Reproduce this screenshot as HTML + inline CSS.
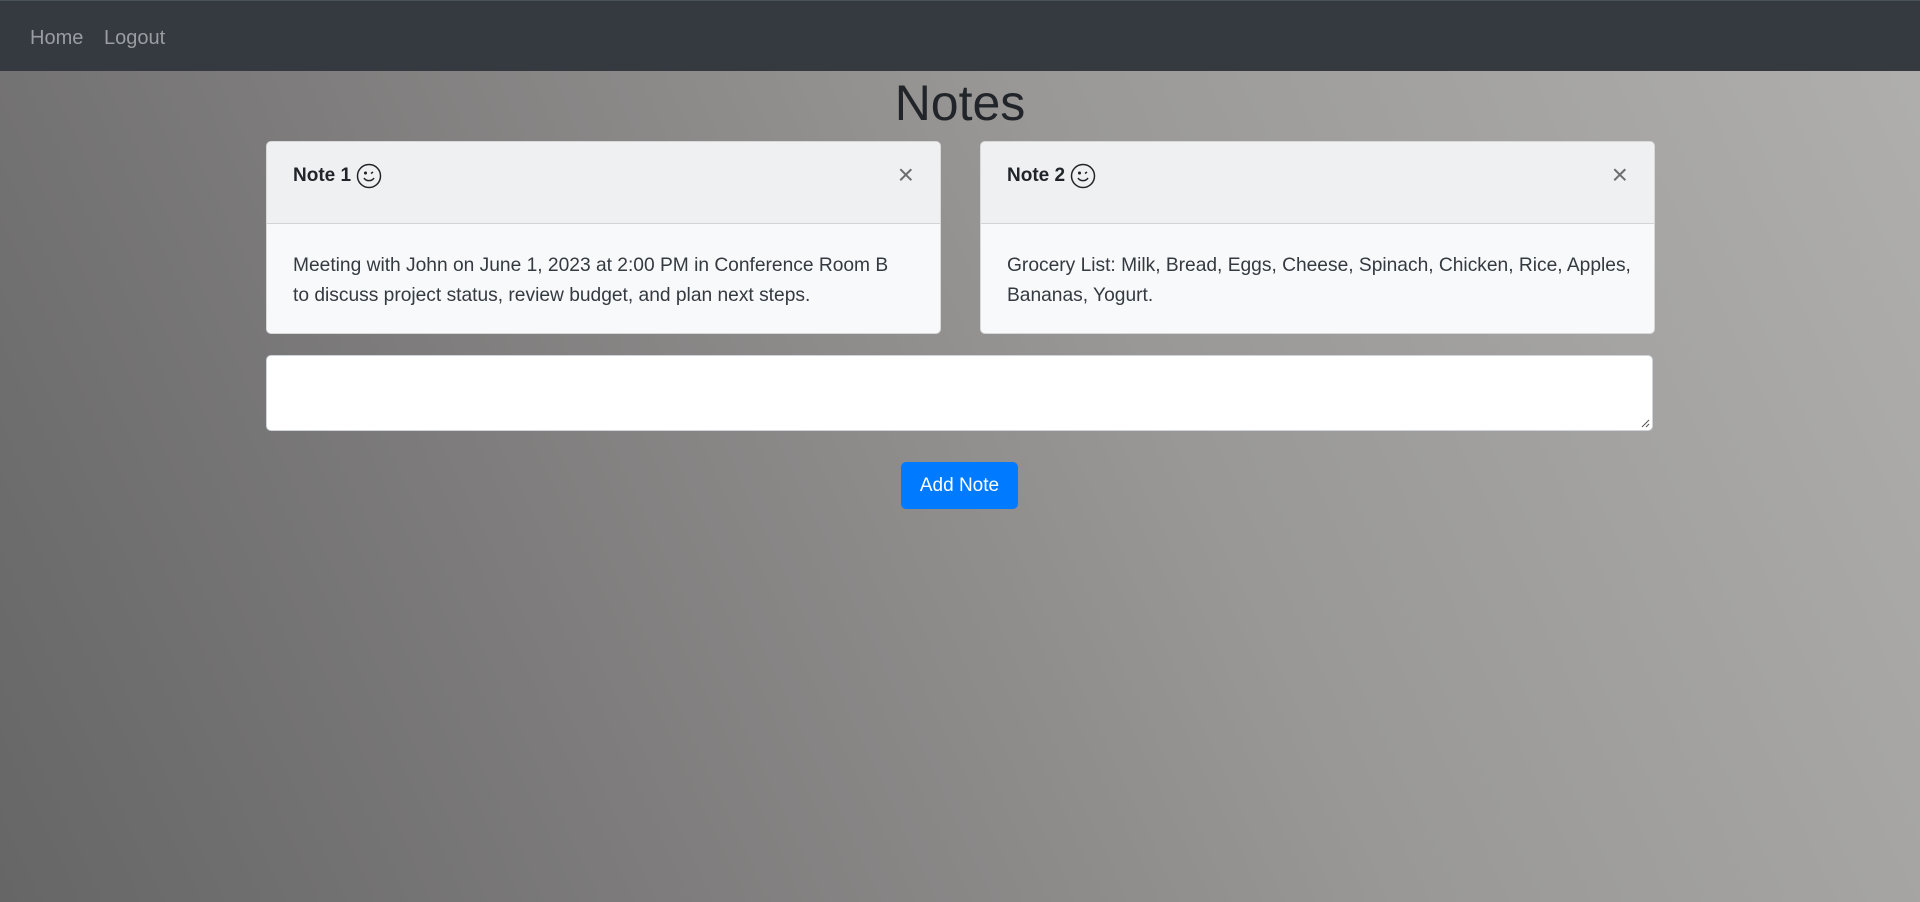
<!DOCTYPE html>
<html><head><meta charset="utf-8"><style>
*{box-sizing:border-box;margin:0;padding:0}
html,body{width:1920px;height:902px;overflow:hidden}
body{font-family:"Liberation Sans",sans-serif;background:linear-gradient(65deg,#666 0%,#7f7d7d 30%,#999896 60%,#b0afad 100%);color:#212529;position:relative}
.nav{position:absolute;left:0;top:0;width:1920px;height:71px;background:#343a40;border-top:1px solid #4a5259}
.nav a{position:absolute;top:26px;font-size:20px;color:#9a9da1;text-decoration:none}
h1{position:absolute;top:74px;left:0;width:1920px;text-align:center;font-size:50px;font-weight:500;color:#212529}
.card{position:absolute;top:141px;width:675px;height:193px;background:#f8f9fa;border:1px solid rgba(0,0,0,.13);border-radius:5px;overflow:hidden}
.hd{height:82px;background:#eff0f2;border-bottom:1px solid #d3d4d6;position:relative}
.hd b{position:absolute;left:26px;top:21px;font-size:19px;display:flex;align-items:center;gap:5px}
.x{position:absolute;right:26px;top:17px;font-size:28px;color:#6c6e70}
.bd{position:absolute;left:26px;top:109px;font-size:19.2px;line-height:30px;color:#343a40;white-space:nowrap}
.ta{position:absolute;left:266px;top:355px;width:1387px;height:76px;background:#fff;border:1px solid #ced4da;border-radius:5px}
.btn{position:absolute;left:901px;top:462px;width:117px;height:47px;background:#007bff;color:#fff;border-radius:5px;font-size:19px;text-align:center;line-height:47px}
</style></head><body>
<div class="nav"><a style="left:30px">Home</a><a style="left:104px">Logout</a></div>
<h1>Notes</h1>
<div class="card" style="left:266px"><div class="hd"><b>Note 1 <svg width="26" height="26" viewBox="0 0 26 26" fill="none" stroke="#212529" stroke-width="1.5"><circle cx="13" cy="13" r="11.5"/><circle cx="9.5" cy="10" r=".8" fill="#212529"/><path d="M15 10.5l2-1.5M8 15c2 3.5 8 3.5 10 0"/></svg></b><span class="x">×</span></div>
<div class="bd">Meeting with John on June 1, 2023 at 2:00 PM in Conference Room B<br>to discuss project status, review budget, and plan next steps.</div></div>
<div class="card" style="left:980px"><div class="hd"><b>Note 2 <svg width="26" height="26" viewBox="0 0 26 26" fill="none" stroke="#212529" stroke-width="1.5"><circle cx="13" cy="13" r="11.5"/><circle cx="9.5" cy="10" r=".8" fill="#212529"/><path d="M15 10.5l2-1.5M8 15c2 3.5 8 3.5 10 0"/></svg></b><span class="x">×</span></div>
<div class="bd">Grocery List: Milk, Bread, Eggs, Cheese, Spinach, Chicken, Rice, Apples,<br>Bananas, Yogurt.</div></div>
<div class="ta"><svg style="position:absolute;right:2px;bottom:2px" width="10" height="10" viewBox="0 0 10 10" stroke="#555" stroke-width="1"><path d="M9 2L2 9M9 6L6 9"/></svg></div>
<div class="btn">Add Note</div>
</body></html>
